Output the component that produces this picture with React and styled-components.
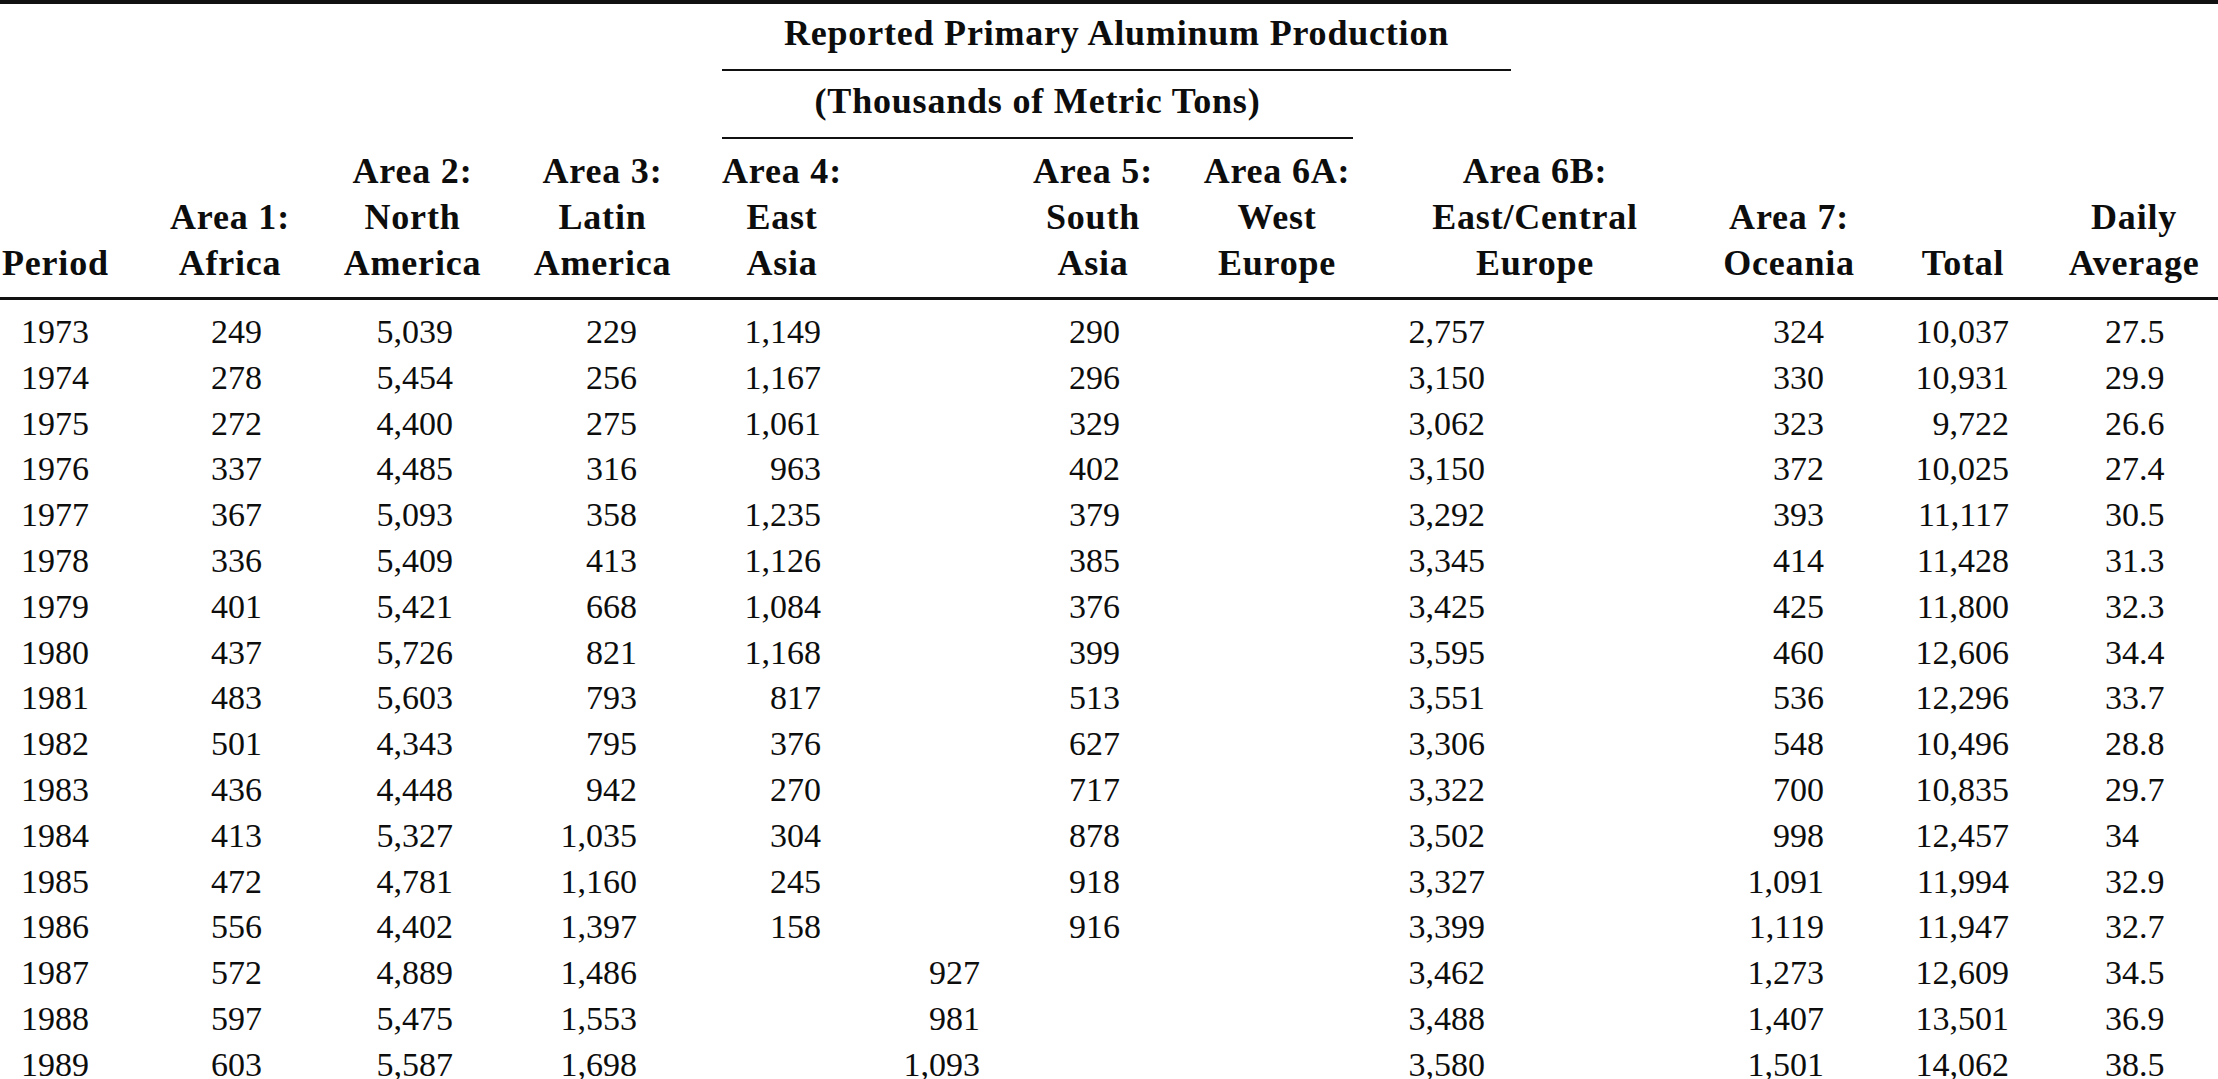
import React from "react"
import styled, { createGlobalStyle } from "styled-components"

const GlobalStyle = createGlobalStyle`
  html, body {
    margin: 0;
    padding: 0;
    background: #fff;
  }
`

const COLS = [
  { w: 140, align: "left", pad: 21 },
  { w: 180, align: "right", pad: 58 },
  { w: 185, align: "right", pad: 52 },
  { w: 195, align: "right", pad: 63 },
  { w: 164, align: "right", pad: 43 },
  { w: 136, align: "right", pad: 0 },
  { w: 186, align: "right", pad: 66 },
  { w: 182, align: "right", pad: 0 },
  { w: 334, align: "right", pad: 217 },
  { w: 174, align: "right", pad: 52 },
  { w: 174, align: "right", pad: 41 },
  { w: 168, align: "left", pad: 55 },
]

const HEADERS = [
  { text: ["Period"], align: "left", pad: 2 },
  { text: ["Area 1:", "Africa"] },
  { text: ["Area 2:", "North", "America"] },
  { text: ["Area 3:", "Latin", "America"] },
  { text: ["Area 4:", "East", "Asia"] },
  { text: [] },
  { text: ["Area 5:", "South", "Asia"] },
  { text: ["Area 6A:", "West", "Europe"] },
  { text: ["Area 6B:", "East/Central", "Europe"] },
  { text: ["Area 7:", "Oceania"] },
  { text: ["Total"] },
  { text: ["Daily", "Average"] },
]

// [year, a1, a2, a3, a4, a5, a6a, a6b, a7, total, daily]; a4 spans into a5 when a5 is null
const ROWS = [
  ["1973", "249", "5,039", "229", "1,149", "290", "", "2,757", "324", "10,037", "27.5"],
  ["1974", "278", "5,454", "256", "1,167", "296", "", "3,150", "330", "10,931", "29.9"],
  ["1975", "272", "4,400", "275", "1,061", "329", "", "3,062", "323", "9,722", "26.6"],
  ["1976", "337", "4,485", "316", "963", "402", "", "3,150", "372", "10,025", "27.4"],
  ["1977", "367", "5,093", "358", "1,235", "379", "", "3,292", "393", "11,117", "30.5"],
  ["1978", "336", "5,409", "413", "1,126", "385", "", "3,345", "414", "11,428", "31.3"],
  ["1979", "401", "5,421", "668", "1,084", "376", "", "3,425", "425", "11,800", "32.3"],
  ["1980", "437", "5,726", "821", "1,168", "399", "", "3,595", "460", "12,606", "34.4"],
  ["1981", "483", "5,603", "793", "817", "513", "", "3,551", "536", "12,296", "33.7"],
  ["1982", "501", "4,343", "795", "376", "627", "", "3,306", "548", "10,496", "28.8"],
  ["1983", "436", "4,448", "942", "270", "717", "", "3,322", "700", "10,835", "29.7"],
  ["1984", "413", "5,327", "1,035", "304", "878", "", "3,502", "998", "12,457", "34"],
  ["1985", "472", "4,781", "1,160", "245", "918", "", "3,327", "1,091", "11,994", "32.9"],
  ["1986", "556", "4,402", "1,397", "158", "916", "", "3,399", "1,119", "11,947", "32.7"],
  ["1987", "572", "4,889", "1,486", "927", null, "", "3,462", "1,273", "12,609", "34.5"],
  ["1988", "597", "5,475", "1,553", "981", null, "", "3,488", "1,407", "13,501", "36.9"],
  ["1989", "603", "5,587", "1,698", "1,093", null, "", "3,580", "1,501", "14,062", "38.5"],
]

const Page = styled.div`
  width: 2218px;
  font-family: "Liberation Serif", "Times New Roman", serif;
  color: #0d0d0d;
`

const Table = styled.table`
  width: 2218px;
  table-layout: fixed;
  border-collapse: separate;
  border-spacing: 0;
  border-top: 4px solid #111;
`

const BannerCell = styled.th`
  padding: 0;
  text-align: left;
  vertical-align: top;
`

const Banner = styled.div`
  width: ${(p) => p.$width}px;
  margin-left: 22px;
  padding: ${(p) => p.$top}px 0 13px;
  border-bottom: 2px solid #111;
  font-size: 36px;
  font-weight: 700;
  line-height: 46px;
  letter-spacing: 0.8px;
  text-align: center;
  white-space: nowrap;
`

const HeadCell = styled.th`
  padding: 9px 0 11px ${(p) => p.$pad || 0}px;
  border-bottom: 3px solid #111;
  font-size: 36px;
  font-weight: 700;
  line-height: 46px;
  letter-spacing: 0.8px;
  text-align: ${(p) => p.$align || "center"};
  vertical-align: bottom;
  white-space: nowrap;
`

const Cell = styled.td`
  height: 45.8px;
  padding: ${(p) => (p.$first ? 9 : 0)}px ${(p) => (p.$align === "right" ? p.$pad : 0)}px 0
    ${(p) => (p.$align === "left" ? p.$pad : 0)}px;
  font-size: 34px;
  font-weight: 400;
  line-height: 45.8px;
  text-align: ${(p) => p.$align};
  vertical-align: top;
  white-space: nowrap;
`

const DataRow = ({ row, first }) => {
  const [year, a1, a2, a3, a4, a5, a6a, a6b, a7, total, daily] = row
  const cell = (i, v) => (
    <Cell key={i} $first={first} $align={COLS[i].align} $pad={COLS[i].pad}>
      {v}
    </Cell>
  )
  const merged = a5 === null
  return (
    <tr>
      {cell(0, year)}
      {cell(1, a1)}
      {cell(2, a2)}
      {cell(3, a3)}
      {merged ? (
        <Cell colSpan={2} $first={first} $align="right" $pad={20}>
          {a4}
        </Cell>
      ) : (
        [cell(4, a4), cell(5, "")]
      )}
      {cell(6, merged ? "" : a5)}
      {cell(7, a6a)}
      {cell(8, a6b)}
      {cell(9, a7)}
      {cell(10, total)}
      {cell(11, daily)}
    </tr>
  )
}

export default function App() {
  return (
    <Page>
      <GlobalStyle />
      <Table>
        <colgroup>
          {COLS.map((c, i) => (
            <col key={i} style={{ width: c.w }} />
          ))}
        </colgroup>
        <thead>
          <tr>
            <th colSpan={4} />
            <BannerCell colSpan={5}>
              <Banner $width={789} $top={6}>
                Reported Primary Aluminum Production
              </Banner>
            </BannerCell>
            <th colSpan={3} />
          </tr>
          <tr>
            <th colSpan={4} />
            <BannerCell colSpan={5}>
              <Banner $width={631} $top={7}>
                (Thousands of Metric Tons)
              </Banner>
            </BannerCell>
            <th colSpan={3} />
          </tr>
          <tr>
            {HEADERS.map((h, i) => (
              <HeadCell key={i} $align={h.align} $pad={h.pad}>
                {h.text.map((t, j) => (
                  <React.Fragment key={j}>
                    {j > 0 && <br />}
                    {t}
                  </React.Fragment>
                ))}
              </HeadCell>
            ))}
          </tr>
        </thead>
        <tbody>
          {ROWS.map((r, i) => (
            <DataRow key={r[0]} row={r} first={i === 0} />
          ))}
        </tbody>
      </Table>
    </Page>
  )
}
